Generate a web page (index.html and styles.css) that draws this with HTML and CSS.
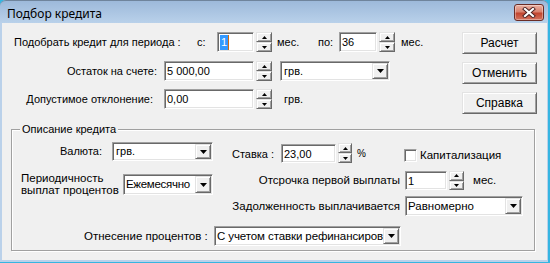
FILE: index.html
```html
<!DOCTYPE html>
<html lang="ru">
<head>
<meta charset="utf-8">
<title>Подбор кредита</title>
<link rel="stylesheet" href="styles.css">
</head>
<body>
<div class="window">
  <div class="frame">
    <div class="titlebar">
      <span class="title">Подбор кредита</span>
      <div class="close">
        <svg width="14" height="11" viewBox="0 0 14 11"><path d="M3 2L11 9M11 2L3 9" stroke="#4a2020" stroke-width="4" stroke-linecap="square"/><path d="M3 2L11 9M11 2L3 9" stroke="#fff" stroke-width="2.2" stroke-linecap="square"/></svg>
      </div>
    </div>
    <div class="client">
      <div class="top">
        <div class="params">
          <div class="row r1">
            <span class="t w-period">Подобрать кредит для периода :</span>
            <span class="t w-s">с:</span>
            <div class="edit w-e1"><span class="sel">1</span><span class="caret"></span></div>
            <div class="spin"><span class="sb"><svg width="5" height="3"><path d="M2.5 0L5 3H0z"/></svg></span><span class="sb"><svg width="5" height="3"><path d="M0 0h5L2.5 3z"/></svg></span></div>
            <span class="t w-mes1">мес.</span>
            <span class="t w-po">по:</span>
            <div class="edit w-e2"><span class="val">36</span></div>
            <div class="spin"><span class="sb"><svg width="5" height="3"><path d="M2.5 0L5 3H0z"/></svg></span><span class="sb"><svg width="5" height="3"><path d="M0 0h5L2.5 3z"/></svg></span></div>
            <span class="t w-mes2">мес.</span>
          </div>
          <div class="row r2">
            <span class="t right w-ost">Остаток на счете:</span>
            <div class="edit w-sum"><span class="val">5 000,00</span></div>
            <div class="spin"><span class="sb"><svg width="5" height="3"><path d="M2.5 0L5 3H0z"/></svg></span><span class="sb"><svg width="5" height="3"><path d="M0 0h5L2.5 3z"/></svg></span></div>
            <div class="combo w-cur1"><span class="val">грв.</span><span class="drop"><svg width="7" height="4"><path d="M0 0h7L3.5 4z"/></svg></span></div>
          </div>
          <div class="row r3">
            <span class="t right w-dop">Допустимое отклонение:</span>
            <div class="edit w-dev"><span class="val">0,00</span></div>
            <div class="spin"><span class="sb"><svg width="5" height="3"><path d="M2.5 0L5 3H0z"/></svg></span><span class="sb"><svg width="5" height="3"><path d="M0 0h5L2.5 3z"/></svg></span></div>
            <span class="t w-grv">грв.</span>
          </div>
        </div>
        <div class="buttons">
          <div class="btn">Расчет</div>
          <div class="btn">Отменить</div>
          <div class="btn">Справка</div>
        </div>
      </div>

      <div class="group">
        <span class="legend">Описание кредита</span>
        <div class="grow g1">
          <span class="t w-val">Валюта:</span>
          <div class="combo w-cur2"><span class="val">грв.</span><span class="drop"><svg width="7" height="4"><path d="M0 0h7L3.5 4z"/></svg></span></div>
          <span class="t w-rate">Ставка :</span>
          <div class="edit w-ratev"><span class="val">23,00</span></div>
          <div class="spin sp-rate"><span class="sb"><svg width="5" height="3"><path d="M2.5 0L5 3H0z"/></svg></span><span class="sb"><svg width="5" height="3"><path d="M0 0h5L2.5 3z"/></svg></span></div>
          <span class="t w-pct">%</span>
          <span class="check"></span>
          <span class="t lbl-cap">Капитализация</span>
        </div>
        <div class="grow g2">
          <span class="t2 w-per">Периодичность<br>выплат процентов</span>
          <div class="combo big w-per2"><span class="val">Ежемесячно</span><span class="drop"><svg width="7" height="4"><path d="M0 0h7L3.5 4z"/></svg></span></div>
          <span class="t right w-otsr">Отсрочка первой выплаты</span>
          <div class="edit w-otsv"><span class="val">1</span></div>
          <div class="spin sp-otsr"><span class="sb"><svg width="5" height="3"><path d="M2.5 0L5 3H0z"/></svg></span><span class="sb"><svg width="5" height="3"><path d="M0 0h5L2.5 3z"/></svg></span></div>
          <span class="t w-mes3">мес.</span>
        </div>
        <div class="grow g3">
          <span class="t right w-zad">Задолженность выплачивается</span>
          <div class="combo big w-zadv"><span class="val">Равномерно</span><span class="drop"><svg width="7" height="4"><path d="M0 0h7L3.5 4z"/></svg></span></div>
        </div>
        <div class="grow g4">
          <span class="t w-otn">Отнесение процентов :</span>
          <div class="combo big w-otnv"><span class="val">С учетом ставки рефинансирования</span><span class="drop"><svg width="7" height="4"><path d="M0 0h7L3.5 4z"/></svg></span></div>
        </div>
      </div>
    </div>
  </div>
</div>
</body>
</html>
```
FILE: styles.css
```css
* { box-sizing: border-box; }
html, body { margin: 0; padding: 0; }
body {
  width: 550px; height: 263px; overflow: hidden;
  font-family: "Liberation Sans", Arial, sans-serif;
  font-size: 11px; color: #000;
  background: #36b5e1;
}
.window { width: 550px; height: 263px; background: #36b5e1; }
.frame {
  width: 548px; height: 262px;
  background: #bad1ea;
  border-radius: 6px 6px 0 0;
  display: flex; flex-direction: column;
}
.titlebar {
  height: 23px; flex: 0 0 23px;
  display: flex; align-items: flex-start; justify-content: space-between;
  background: linear-gradient(#9db9da, #b9d1ea);
  border-radius: 6px 6px 0 0;
  border-top: 1px solid #6f849c;
}
.title {
  font-family: "Noto Sans", "Open Sans", sans-serif;
  font-size: 12px; line-height: 18px;
  padding: 4px 0 0 7px;
  color: #000;
}
.close {
  width: 30px; height: 17px;
  margin: 3px 4px 0 0;
  border: 1px solid #6a2c26;
  border-radius: 3px;
  background: linear-gradient(#eab1a3 0%, #d9826f 45%, #c2452f 55%, #d3735f 100%);
  box-shadow: inset 0 0 0 1px rgba(255,255,255,0.35);
  display: flex; align-items: center; justify-content: center;
}
.client {
  margin-left: 2px; width: 545px; height: 237px; flex: 0 0 237px;
  background: #f0f0f0;
  padding-top: 9px;
}

/* generic */
.t { white-space: nowrap; line-height: 20px; }
.right { text-align: right; }
.row { display: flex; align-items: center; height: 20px; }

.edit {
  height: 20px; background: #fff;
  border: 1px solid; border-color: #a0a0a0 #fff #fff #a0a0a0;
  box-shadow: inset 1px 1px 0 #696969, inset -1px -1px 0 #e3e3e3;
  padding: 1px 2px 1px 2px;
  display: flex; align-items: center;
  line-height: 14px; white-space: nowrap; overflow: hidden;
}
.sel { background: #3399ff; color: #fff; padding: 0 1px; line-height: 15px; }
.caret { width: 1px; height: 15px; background: #d06a10; }

.spin { width: 16px; height: 20px; margin-left: 2px; display: flex; flex-direction: column; }
.sb {
  flex: 1; display: flex; align-items: center; justify-content: center;
  background: #f0f0f0;
  border: 1px solid; border-color: #e3e3e3 #696969 #696969 #e3e3e3;
  box-shadow: inset 1px 1px 0 #fff, inset -1px -1px 0 #a0a0a0;
}
.sb svg { display: block; }

.combo {
  height: 20px; background: #fff;
  border: 1px solid; border-color: #a0a0a0 #fff #fff #a0a0a0;
  box-shadow: inset 1px 1px 0 #696969, inset -1px -1px 0 #e3e3e3;
  padding: 1px;
  display: flex;
}
.combo .val {
  flex: 1; overflow: hidden; white-space: nowrap;
  padding-left: 2px; line-height: 16px;
}
.combo.big .val { font-size: 11.5px; padding-left: 1px; }
.drop {
  width: 16px; flex: 0 0 16px;
  background: #f0f0f0;
  border: 1px solid; border-color: #e3e3e3 #696969 #696969 #e3e3e3;
  box-shadow: inset 1px 1px 0 #fff, inset -1px -1px 0 #a0a0a0;
  display: flex; align-items: center; justify-content: center;
}
.drop svg { display: block; }

.btn {
  width: 75px; height: 22px;
  background: #f0f0f0;
  border: 1px solid; border-color: #e3e3e3 #696969 #696969 #e3e3e3;
  box-shadow: inset 1px 1px 0 #fff, inset -1px -1px 0 #a0a0a0;
  display: flex; align-items: center; justify-content: center;
  font-size: 12px;
}

/* top area */
.top { display: flex; padding-left: 12px; }
.params { flex: 0 0 448px; }
.buttons { display: flex; flex-direction: column; gap: 8px; }
.r2 { margin-top: 9px; }
.r3 { margin-top: 8px; }
.w-period { width: 183px; }
.w-s { width: 20px; }
.w-e1 { width: 37px; }
.w-mes1 { width: 41px; margin-left: 5px; }
.w-po { width: 21px; }
.w-e2 { width: 38px; }
.w-mes2 { margin-left: 6px; }
.w-ost { width: 143px; }
.w-sum { width: 90px; margin-left: 7px; }
.w-cur1 { width: 110px; margin-left: 8px; margin-top: -1px; }
.w-dop { width: 139px; }
.w-dev { width: 90px; margin-left: 11px; }
.w-grv { margin-left: 12px; }

/* group */
.group {
  position: relative;
  margin: 15px 0 0 9px;
  width: 524px; height: 122px;
  border: 1px solid #a0a0a0;
  box-shadow: 1px 1px 0 #fff, inset 1px 1px 0 #fff;
}
.legend {
  position: absolute; top: -8px; left: 8px;
  background: #f0f0f0; padding: 0 2px;
  line-height: 14px; white-space: nowrap;
}
.grow { display: flex; align-items: flex-start; }
.g1 { margin-top: 11px; height: 22px; }
.g2 { margin-top: 8px; height: 25px; }
.g3 { height: 20px; }
.g4 { margin-top: 10px; height: 20px; }

.w-val { margin-left: 48px; width: 52px; }
.w-cur2 { width: 101px; height: 19px; margin-top: 1px; }
.w-cur2 .val { line-height: 15px; }
.w-rate { margin-left: 19px; width: 49px; margin-top: 3px; }
.w-ratev { width: 55px; height: 19px; margin-top: 3px; }
.sp-rate { width: 14px; margin-top: 2px; }
.w-pct { margin-left: 5px; width: 47px; margin-top: 3px; font-size: 10px; }
.check {
  width: 13px; height: 13px; margin-top: 8px;
  background: #fff;
  border: 1px solid; border-color: #a0a0a0 #fff #fff #a0a0a0;
  box-shadow: inset 1px 1px 0 #696969, inset -1px -1px 0 #e3e3e3;
}
.lbl-cap { margin-left: 3px; margin-top: 8px; line-height: 13px; font-size: 11.5px; }

.t2 { margin-left: 9px; width: 102px; line-height: 12px; margin-top: 1px; white-space: nowrap; font-size: 11.5px; }
.w-per2 { width: 90px; height: 21px; margin-top: 3px; }
.w-per2 .val { line-height: 17px; letter-spacing: -0.3px; font-size: 11px; }
.w-otsr { width: 187px; line-height: 19px; font-size: 11.5px; }
.w-otsv { width: 42px; height: 19px; margin-left: 5px; }
.sp-otsr { width: 15px; height: 19px; }
.w-mes3 { margin-left: 9px; line-height: 19px; font-size: 11.5px; }

.w-zad { width: 388px; font-size: 11.5px; }
.w-zadv { width: 118px; margin-left: 5px; }

.w-otn { margin-left: 72px; width: 130px; font-size: 11.5px; }
.w-otnv { width: 187px; }
.w-otnv .val { font-size: 11px; letter-spacing: -0.1px; }
```
